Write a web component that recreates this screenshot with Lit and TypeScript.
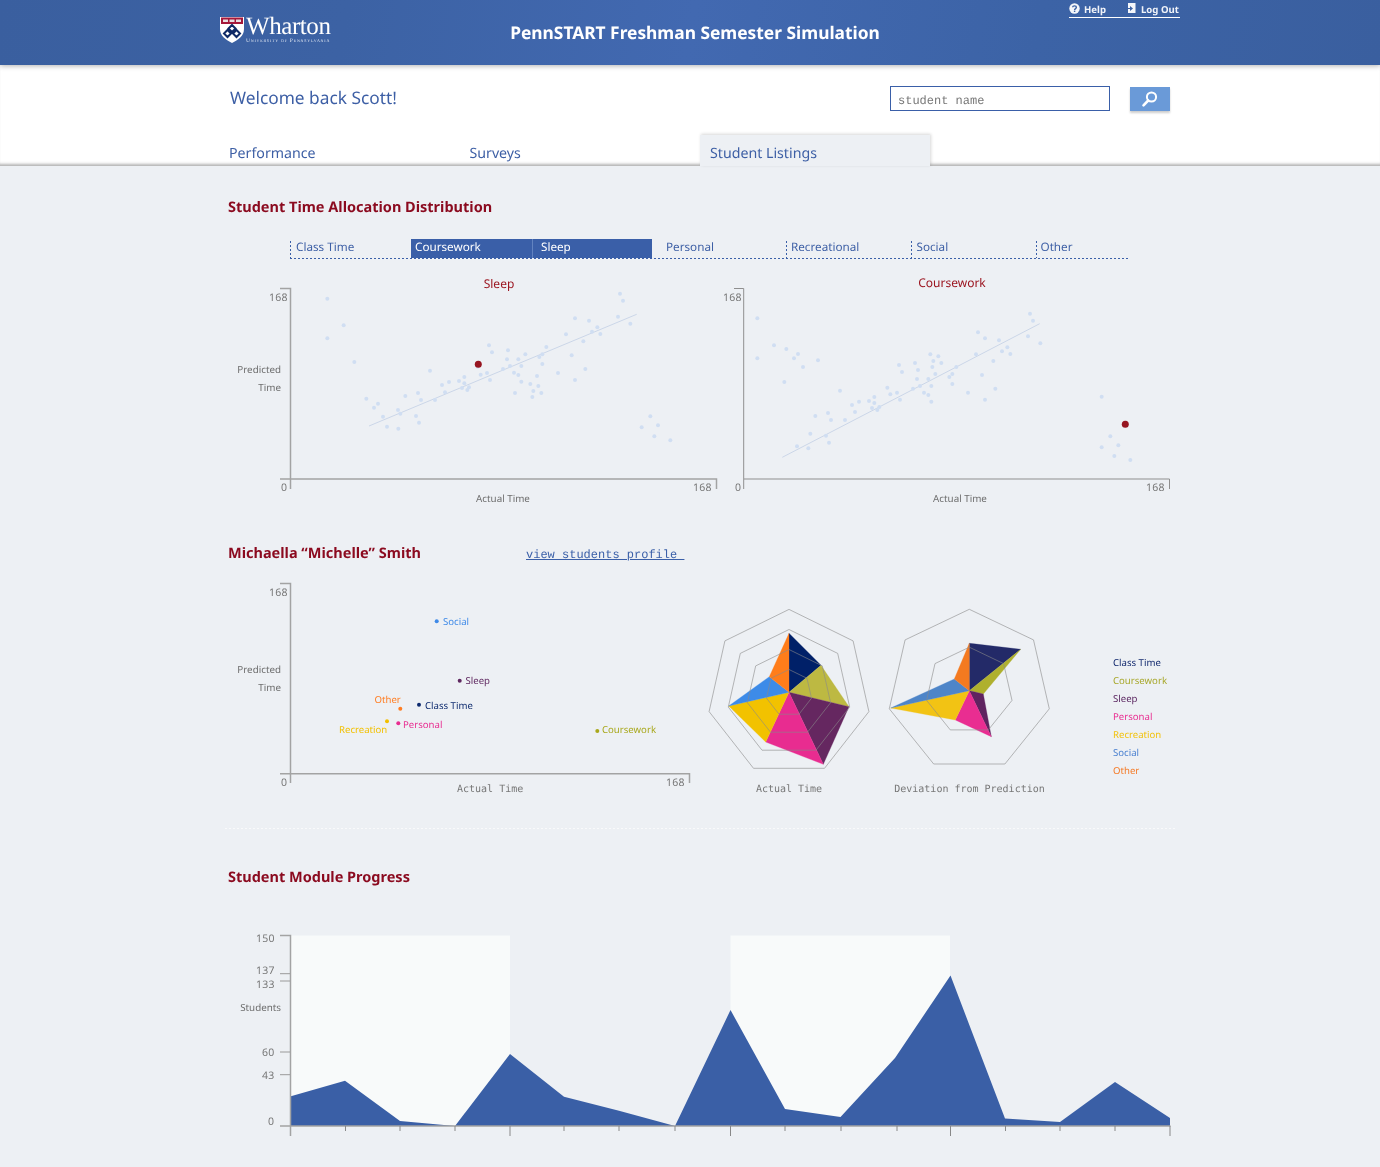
import { LitElement, html, css, svg } from "lit";
import { customElement } from "lit/decorators.js";

type P = [number, number];
const z = (pts: number[][], ox: number, oy: number): P[] => pts.map(([x, y]) => [ox + x / 3, oy + y / 3]);
const str = (pts: P[]) => pts.map((p) => p.map((n) => n.toFixed(1)).join(",")).join(" ");

const S1 = z([[322,206],[371,286],[322,325],[403,396],[439,506],[462,533],[474,521],[489,560],[501,590],[534,540],[541,551],[535,596],[556,498],[588,558],[597,578],[594,489],[603,510],[645,510],[630,422],[666,465],[675,487],[687,456],[717,453],[733,441],[733,460],[726,474],[742,480],[747,472],[773,410],[782,434],[801,429],[810,450],[807,346],[816,367],[849,417],[861,388],[864,361],[870,408],[882,428],[895,435],[895,388],[904,408],[904,455],[916,373],[885,489],[931,462],[940,483],[937,501],[955,468],[964,489],[951,438],[958,381],[967,373],[967,402],[979,351],[1014,429],[1038,313],[1055,376],[1065,265],[1065,450],[1090,334],[1096,417],[1107,272],[1116,305],[1132,292],[1141,312],[1194,260],[1200,191],[1209,212],[1231,281],[1265,592],[1291,559],[1314,586],[1303,619],[1351,631]], 220, 230);
const S2 = z([[172,265],[172,385],[222,346],[259,357],[253,456],[282,385],[294,372],[309,411],[354,391],[420,482],[346,558],[384,549],[393,570],[435,570],[331,611],[378,617],[387,638],[291,649],[325,655],[456,525],[465,546],[477,515],[507,513],[523,501],[523,519],[516,534],[532,540],[538,531],[562,473],[571,493],[591,488],[600,509],[597,405],[606,426],[639,476],[651,447],[654,420],[660,468],[672,488],[685,495],[685,447],[694,468],[694,515],[706,432],[645,399],[691,373],[700,393],[697,411],[715,379],[724,399],[748,441],[757,432],[757,462],[769,411],[804,488],[828,373],[846,435],[855,509],[834,307],[855,325],[880,393],[886,476],[897,331],[906,364],[922,352],[931,372],[984,319],[990,251],[999,272],[1021,340],[1205,500],[1231,619],[1205,652],[1255,646],[1243,678],[1291,690]], 700, 230);

const TABS = [
  { t: "Class Time", w: 121, pad: 6, on: false, dot: true },
  { t: "Coursework", w: 121, pad: 4, on: true, dot: false },
  { t: "Sleep", w: 120, pad: 8, on: true, dot: false },
  { t: "Personal", w: 133.5, pad: 14, on: false, dot: false },
  { t: "Recreational", w: 125, pad: 5.5, on: false, dot: true },
  { t: "Social", w: 125, pad: 6, on: false, dot: true },
  { t: "Other", w: 92.5, pad: 5, on: false, dot: true },
];

const LEGEND = [
  ["Class Time", "#12296e"], ["Coursework", "#a8a82c"], ["Sleep", "#5a2560"], ["Personal", "#e92d91"],
  ["Recreation", "#f2c20c"], ["Social", "#4a80d0"], ["Other", "#f57a26"],
];

const LABELS: { d: P; t: string; x: number; y: number; c: string }[] = [
  { d: [436.7, 621.3], t: "Social", x: 443, y: 625, c: "#3f8ae8" },
  { d: [459.7, 680.7], t: "Sleep", x: 465.5, y: 684, c: "#5f2860" },
  { d: [419, 704.7], t: "Class Time", x: 425, y: 709, c: "#0d2a6e" },
  { d: [400.3, 708.7], t: "Other", x: 374.5, y: 703, c: "#ff7d22" },
  { d: [387, 721.3], t: "Recreation", x: 339, y: 733, c: "#f2c000" },
  { d: [398.3, 723.3], t: "Personal", x: 403, y: 728, c: "#e82c90" },
  { d: [597.3, 731], t: "Coursework", x: 602, y: 733, c: "#a9a81c" },
];

const hept = (cx: number, cy: number, r: number, sx = 1): P[] =>
  Array.from({ length: 7 }, (_, i) => {
    const a = (i * 2 * Math.PI) / 7;
    return [cx + Math.sin(a) * r * sx, cy - Math.cos(a) * r] as P;
  });

const wedges = (c: P, pts: P[], cols: string[]) =>
  pts.map((p, i) => svg`<polygon points=${str([c, p, pts[(i + 1) % pts.length]])} fill=${cols[i]} stroke=${cols[i]} stroke-width=".3"></polygon>`);

const R1 = z([[267,100],[363,196],[447,320],[370,493],[197,426],[86,318],[208,230]], 700, 600);
const R2 = z([[268,130],[422,148],[310,282],[334,410],[226,360],[32,324],[223,237]], 880, 600);
const TICKS = [290, 345.5, 400, 455, 510, 564, 619, 675, 730.5, 785, 841, 897, 950.5, 1005.5, 1060, 1115, 1170];
const LONG = new Set([290, 510, 730.5, 950.5, 1170]);
const AREA: P[] = [[290,1096.5],[345,1080.7],[400,1121],[455,1126],[510,1054],[564,1096.7],[619,1110.7],[675,1126],[730.5,1010],[785,1109],[840.5,1117],[895,1058],[950.5,975.5],[1005,1118.5],[1060,1122],[1115,1082],[1170,1118],[1170,1126],[290,1126]];

@customElement("app-root")
export class AppRoot extends LitElement {
  static styles = css`
    :host { display: block; width: 1380px; background: #edf0f4; font-family: "Noto Sans", "Open Sans", sans-serif; text-rendering: geometricPrecision; }
    svg { display: block; flex: none; }
    svg text { font-family: "Noto Sans", "Open Sans", sans-serif; }
    svg text.m { font-family: "DejaVu Sans Mono", monospace; font-size: 10px; fill: #777; }
    svg text.ax { font-size: 10.5px; fill: #777; letter-spacing: .3px; }
    svg text.lb { font-size: 9.8px; fill: #6e6e6e; }
    svg text.ct { font-size: 12px; fill: #9b1520; }
    svg text.pt { font-size: 9.6px; }
    .hdr { position: relative; z-index: 2; height: 65px; background: linear-gradient(100deg, #3a5f9f 0%, #3c62a4 25%, #4269b1 50%, #3c63a6 75%, #3a5f9f 100%); box-shadow: 0 1px 5px rgba(0,0,0,.3); }
    .hdr-in { width: 960px; margin: 0 auto; height: 65px; display: flex; padding-left: 20px; will-change: transform; }
    .logo { display: flex; width: 112px; margin-top: 16px; height: 30px; flex: none; }
    .logo-t { margin-left: 2px; color: #fff; white-space: nowrap; }
    .wh { font: 25px/22px "Liberation Serif", serif; letter-spacing: -.42px; }
    .un { font: 5.5px/7px "Liberation Serif", serif; font-variant: small-caps; letter-spacing: .78px; color: #dfe6f2; }
    .title { flex: none; width: 372px; margin: 21px 0 0 177px; color: #fff; font-weight: 700; font-size: 17.35px; line-height: 24px; white-space: nowrap; text-align: center; }
    .util { margin-left: 188px; width: 111px; border-bottom: 1px solid #fff; display: flex; flex: none; align-items: flex-start; color: #f0f3f9; font-weight: 700; font-size: 9.6px; line-height: 13px; padding-top: 3px; box-sizing: border-box; height: 18px; }
    .util span { display: block; margin-top: 0; }
    .u1 { margin-right: 20px; display: flex; gap: 4px; }
    .u2 { display: flex; gap: 5px; }
    .band { background: #fff; height: 101px; box-shadow: inset 0 -4px 3px -2px rgba(0,0,0,.3); }
    .band-in { width: 960px; margin: 0 auto; position: relative; will-change: transform; }
    .top { display: flex; height: 70px; align-items: flex-start; padding-left: 20px; }
    .wel { color: #3d5fa5; font-size: 17.3px; line-height: 24px; margin-top: 22px; width: 660px; flex: none; white-space: nowrap; }
    .srch { flex: none; box-sizing: border-box; width: 220px; height: 25px; margin-top: 21px; border: 1px solid #3a5fa8; padding-left: 7px; font: 12px/28px "Liberation Mono", monospace; color: #777; }
    .btn { flex: none; width: 40px; height: 24px; margin: 22px 0 0 20px; background: #6a9ad8; box-shadow: 0 2px 2px rgba(0,0,0,.2); display: flex; align-items: center; justify-content: center; }
    .tabs { display: flex; gap: 10px; padding-left: 9px; }
    .tab { width: 230.5px; height: 31px; box-sizing: border-box; padding: 7px 0 0 10px; color: #3d5fa5; font-size: 14.2px; line-height: 24px; white-space: nowrap; }
    .tab.on { width: 230px; background: #edf0f4; box-shadow: 1px -1px 3px rgba(0,0,0,.16); }
    .main { width: 960px; margin: 0 auto; padding: 31px 0 22px; position: relative; will-change: transform; }
    .h { font-size: 14.5px; font-weight: 700; color: #8b0a1f; line-height: 20px; padding-left: 18px; white-space: nowrap; }
    .bar { display: flex; margin: 22px 0 0 80px; width: 838px; height: 20px; box-sizing: border-box; padding-bottom: 1px; background: linear-gradient(to right, #3a5fa8 2px, transparent 2px) 0 100% / 4px 1px repeat-x; }
    .b { font-size: 11.7px; color: #3d5fa5; box-sizing: border-box; flex: none; height: 19px; display: flex; align-items: flex-start; white-space: nowrap; }
    .b.on { background: #3a5fa8; color: #fff; }
    .b.on + .b.on { border-left: 1px solid #6283c0; }
    .b span { display: block; line-height: 13px; height: 17px; margin-top: 2px; }
    .b.dot span { background: linear-gradient(to bottom, #3a5fa8 2px, transparent 2px) 0 0 / 1px 4px repeat-y; }
    .row { display: flex; }
    .gap1 { margin-top: 11px; }
    .head2 { display: flex; margin-top: 33px; align-items: flex-start; }
    .head2 .h { width: 316px; flex: none; box-sizing: border-box; }
    .pro { font: 12px/20px "Liberation Mono", monospace; color: #3a5fa8; text-decoration: underline; white-space: pre; margin-top: 2px; }
    .gap2 { margin-top: 5px; }
    .leg { margin: 84px 0 0 53px; font-size: 9.6px; line-height: 18px; }
    .sep { margin: 28px -5px 0 15px; height: 1px; background: linear-gradient(to right, #f9fafb 2px, transparent 2px) 0 0 / 4px 1px repeat-x; }
    .h3 { margin-top: 38px; }
    .gap3 { margin-top: 38px; }
  `;

  scatter(x: number, w: number, pts: P[], red: P, line: [P, P], ax: any) {
    return svg`<svg width=${w} height="240" viewBox="${x} 270 ${w} 240">
      <line x1=${line[0][0]} y1=${line[0][1]} x2=${line[1][0]} y2=${line[1][1]} stroke="#cbd6e8" stroke-width="1"></line>
      ${pts.map((p) => svg`<circle cx=${p[0]} cy=${p[1]} r="2" fill="#d0def2"></circle>`)}
      <circle cx=${red[0]} cy=${red[1]} r="3.5" fill="#961520"></circle>
      ${ax}
    </svg>`;
  }

  render() {
    const a1 = svg`
      <path d="M280 288.5H290.5V489M280 479H716.5V489" fill="none" stroke="#a3a3a3" stroke-width="1.5"></path>
      <text class="ax" x="269" y="301">168</text><text class="ax" x="281" y="491">0</text><text class="ax" x="693" y="491">168</text>
      <text class="lb" x="281" y="373" text-anchor="end">Predicted</text><text class="lb" x="281" y="391" text-anchor="end">Time</text>
      <text class="lb" x="503" y="502" text-anchor="middle">Actual Time</text>
      <text class="ct" x="499" y="288" text-anchor="middle">Sleep</text>`;
    const a2 = svg`
      <path d="M734 288.5H743.7V489M744 479H1169.5V489" fill="none" stroke="#8f8f8f" stroke-width="1"></path>
      <text class="ax" x="723" y="301">168</text><text class="ax" x="735" y="491">0</text><text class="ax" x="1146" y="491">168</text>
      <text class="lb" x="960" y="502" text-anchor="middle">Actual Time</text>
      <text class="ct" x="952" y="287" text-anchor="middle">Coursework</text>`;
    const cols1 = ["#002068", "#bdb942", "#652760", "#e82c90", "#f2c200", "#3d8be8", "#ff7d1a"];
    const cols2 = ["#232a68", "#afb02e", "#5f2360", "#e92d91", "#f2c314", "#4e85c8", "#f47a20"];
    return html`
      <div class="hdr"><div class="hdr-in">
        <div class="logo">
          <svg width="24" height="27" viewBox="0 0 24 27">
            <path d="M0 1H24V13C24 20 18 24 12 27C6 24 0 20 0 13Z" fill="#fff"></path>
            <rect x="1" y="1.5" width="22" height="6.5" fill="#a5183a"></rect>
            <rect x="3" y="3.5" width="5" height="2.5" fill="#e8dfe2"></rect><rect x="9.5" y="3.5" width="5" height="2.5" fill="#e8dfe2"></rect><rect x="16" y="3.5" width="5" height="2.5" fill="#e8dfe2"></rect>
            <path d="M12 9L15.5 12.5L12 16L8.5 12.5ZM7.5 14L11 17.5L7.5 21L4 17.5ZM16.5 14L20 17.5L16.5 21L13 17.5Z" fill="none" stroke="#0f2a66" stroke-width="2"></path>
          </svg>
          <div class="logo-t"><div class="wh">Wharton</div><div class="un">University of Pennsylvania</div></div>
        </div>
        <div class="title">PennSTART Freshman Semester Simulation</div>
        <div class="util">
          <div class="u1">
            <svg width="11" height="11" viewBox="0 0 11 11"><circle cx="5.5" cy="5.5" r="5.2" fill="#f4f6fa"></circle><path d="M3.6 4.2C3.7 2.4 7.4 2.4 7.4 4.3C7.4 5.6 5.6 5.6 5.6 7" fill="none" stroke="#3c62a4" stroke-width="1.4"></path><rect x="4.9" y="7.6" width="1.4" height="1.4" fill="#3c62a4"></rect></svg>
            <span>Help</span>
          </div>
          <div class="u2">
            <svg width="10" height="11" viewBox="0 0 10 11"><path d="M2 0H9.5V10H2Z" fill="#f4f6fa"></path><path d="M0 5H4V3L7 5.5L4 8V6H0Z" fill="#3c62a4"></path></svg>
            <span>Log Out</span>
          </div>
        </div>
      </div></div>
      <div class="band"><div class="band-in">
        <div class="top">
          <div class="wel">Welcome back Scott!</div>
          <div class="srch">student name</div>
          <div class="btn"><svg width="18" height="18" viewBox="0 0 18 18"><circle cx="10.5" cy="7" r="4.6" fill="none" stroke="#fff" stroke-width="2"></circle><path d="M7.2 10.5L2.5 15.3" stroke="#fff" stroke-width="2.6" stroke-linecap="round"></path></svg></div>
        </div>
        <div class="tabs">
          <div class="tab">Performance</div><div class="tab">Surveys</div><div class="tab on">Student Listings</div>
        </div>
      </div></div>
      <div class="main">
        <div class="h">Student Time Allocation Distribution</div>
        <div class="bar">
          ${TABS.map((b) => html`<div class="b ${b.on ? "on" : ""} ${b.dot ? "dot" : ""}" style="width:${b.w}px"><span style="padding-left:${b.pad}px">${b.t}</span></div>`)}
        </div>
        <div class="row gap1">
          ${this.scatter(210, 510, S1, [478.3, 364.3], [[369, 426], [636.7, 314.3]], a1)}
          ${this.scatter(720, 451, S2, [1125.3, 424.3], [[782.3, 457.3], [1039.7, 323.7]], a2)}
        </div>
        <div class="head2">
          <div class="h">Michaella “Michelle” Smith</div>
          <div class="pro">view students profile </div>
        </div>
        <div class="row gap2">
          <svg width="490" height="230" viewBox="210 570 490 230">
            <path d="M280 583.5H290.5V783M280 773.7H689.5V783" fill="none" stroke="#a3a3a3" stroke-width="1.5"></path>
            <text class="ax" x="269" y="596">168</text><text class="ax" x="281" y="786">0</text><text class="ax" x="666" y="786">168</text>
            <text class="lb" x="281" y="673" text-anchor="end">Predicted</text><text class="lb" x="281" y="691" text-anchor="end">Time</text>
            <text class="m" x="457" y="792">Actual Time</text>
            ${LABELS.map((l) => svg`<circle cx=${l.d[0]} cy=${l.d[1]} r="2" fill=${l.c}></circle><text class="pt" x=${l.x} y=${l.y} fill=${l.c}>${l.t}</text>`)}
          </svg>
          <svg width="180" height="230" viewBox="700 570 180 230">
            ${wedges([789, 692.3], R1, cols1)}
            ${[83.6, 63.5, 43.5, 23.5].map((r) => svg`<polygon points=${str(hept(789, 693, r, 0.98))} fill="none" stroke="#8a8a8a" stroke-opacity=".75" stroke-width=".8"></polygon>`)}
            <text class="m" x="789" y="792" text-anchor="middle">Actual Time</text>
          </svg>
          <svg width="180" height="230" viewBox="880 570 180 230">
            ${wedges([969.3, 690.7], R2, cols2)}
            ${[81.4, 43.5].map((r) => svg`<polygon points=${str(hept(969.3, 690.7, r, 1.008))} fill="none" stroke="#8a8a8a" stroke-opacity=".75" stroke-width=".8"></polygon>`)}
            <text class="m" x="969.5" y="792" text-anchor="middle">Deviation from Prediction</text>
          </svg>
          <div class="leg">${LEGEND.map(([t, c]) => html`<div style="color:${c}">${t}</div>`)}</div>
        </div>
        <div class="sep"></div>
        <div class="h h3">Student Module Progress</div>
        <div class="gap3">
          <svg width="960" height="220" viewBox="210 925 960 220" style="overflow:visible">
            <rect x="290" y="935.5" width="220" height="191" fill="#f8fafa"></rect>
            <rect x="730.5" y="935.5" width="219.5" height="191" fill="#f8fafa"></rect>
            <polygon points=${str(AREA)} fill="#3a5fa6"></polygon>
            <path d="M280 935.5H290.5V1136M280 1126H1170.5" fill="none" stroke="#a3a3a3" stroke-width="1.5"></path>
            ${[973.7, 981, 1052, 1074.7].map((y) => svg`<line x1="280" y1=${y} x2="290" y2=${y} stroke="#9a9a9a"></line>`)}
            ${TICKS.slice(1).map((x) => svg`<line x1=${x} y1="1126" x2=${x} y2=${LONG.has(x) ? 1136 : 1131} stroke="#888"></line>`)}
            ${[["150", 256, 942], ["137", 256, 974], ["133", 256, 988], ["60", 262, 1056], ["43", 262, 1079], ["0", 268, 1125]].map(([t, x, y]) => svg`<text class="ax" x=${x} y=${y}>${t}</text>`)}
            <text class="lb" x="281" y="1011" text-anchor="end">Students</text>
          </svg>
        </div>
      </div>
    `;
  }
}
